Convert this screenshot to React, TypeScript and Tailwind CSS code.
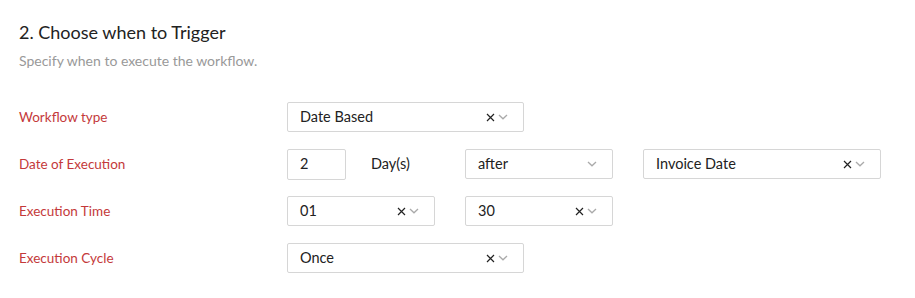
import React from "react";

const X = () => (
  <svg width="9" height="9" viewBox="0 0 9 9" className="shrink-0">
    <path d="M1 1 L8 8 M8 1 L1 8" stroke="#222" strokeWidth="1.2" fill="none" />
  </svg>
);

const Chevron = () => (
  <svg width="10" height="6" viewBox="0 0 10 6" className="shrink-0">
    <path d="M1 1 L5 4.8 L9 1" stroke="#aaa" strokeWidth="1.3" fill="none" />
  </svg>
);

function Select({ value, width, clear = true }: { value: string; width: string; clear?: boolean }) {
  return (
    <div
      className={`${width} h-[30px] flex items-center border border-[#d6d6d6] rounded-[2px] pl-[12px] pr-[15px] bg-white`}
    >
      <span className="flex-1 text-[14.5px] text-[#222]">{value}</span>
      {clear && <X />}
      <span className="ml-[3px] flex items-center">
        <Chevron />
      </span>
    </div>
  );
}

function Row({ label, children }: { label: string; children: React.ReactNode }) {
  return (
    <div className="flex items-center h-[30px]">
      <div className="w-[268px] text-[13.5px] text-[#c4393a]">{label}</div>
      <div className="flex items-center">{children}</div>
    </div>
  );
}

export default function App() {
  return (
    <div
      className="w-[915px] h-[298px] bg-white pl-[19px] pt-[20px]"
      style={{ fontFamily: "Lato, 'Open Sans', sans-serif" }}
    >
      <h2 className="text-[18px] text-[#222] leading-[24px]">2. Choose when to Trigger</h2>
      <p className="mt-[8px] text-[14px] text-[#999] leading-[18px]">Specify when to execute the workflow.</p>
      <div className="mt-[32px] flex flex-col gap-[17px]">
        <Row label="Workflow type">
          <Select value="Date Based" width="w-[237px]" />
        </Row>
        <Row label="Date of Execution">
          <div className="w-[59px] h-[31px] border border-[#d6d6d6] rounded-[2px] pl-[12px] flex items-center text-[14.5px] text-[#222]">
            2
          </div>
          <div className="w-[119px] pl-[25px] text-[14.5px] text-[#222]">Day(s)</div>
          <Select value="after" width="w-[148px]" clear={false} />
          <div className="w-[30px]" />
          <Select value="Invoice Date" width="w-[238px]" />
        </Row>
        <Row label="Execution Time">
          <Select value="01" width="w-[148px]" />
          <div className="w-[30px]" />
          <Select value="30" width="w-[148px]" />
        </Row>
        <Row label="Execution Cycle">
          <Select value="Once" width="w-[237px]" />
        </Row>
      </div>
    </div>
  );
}
